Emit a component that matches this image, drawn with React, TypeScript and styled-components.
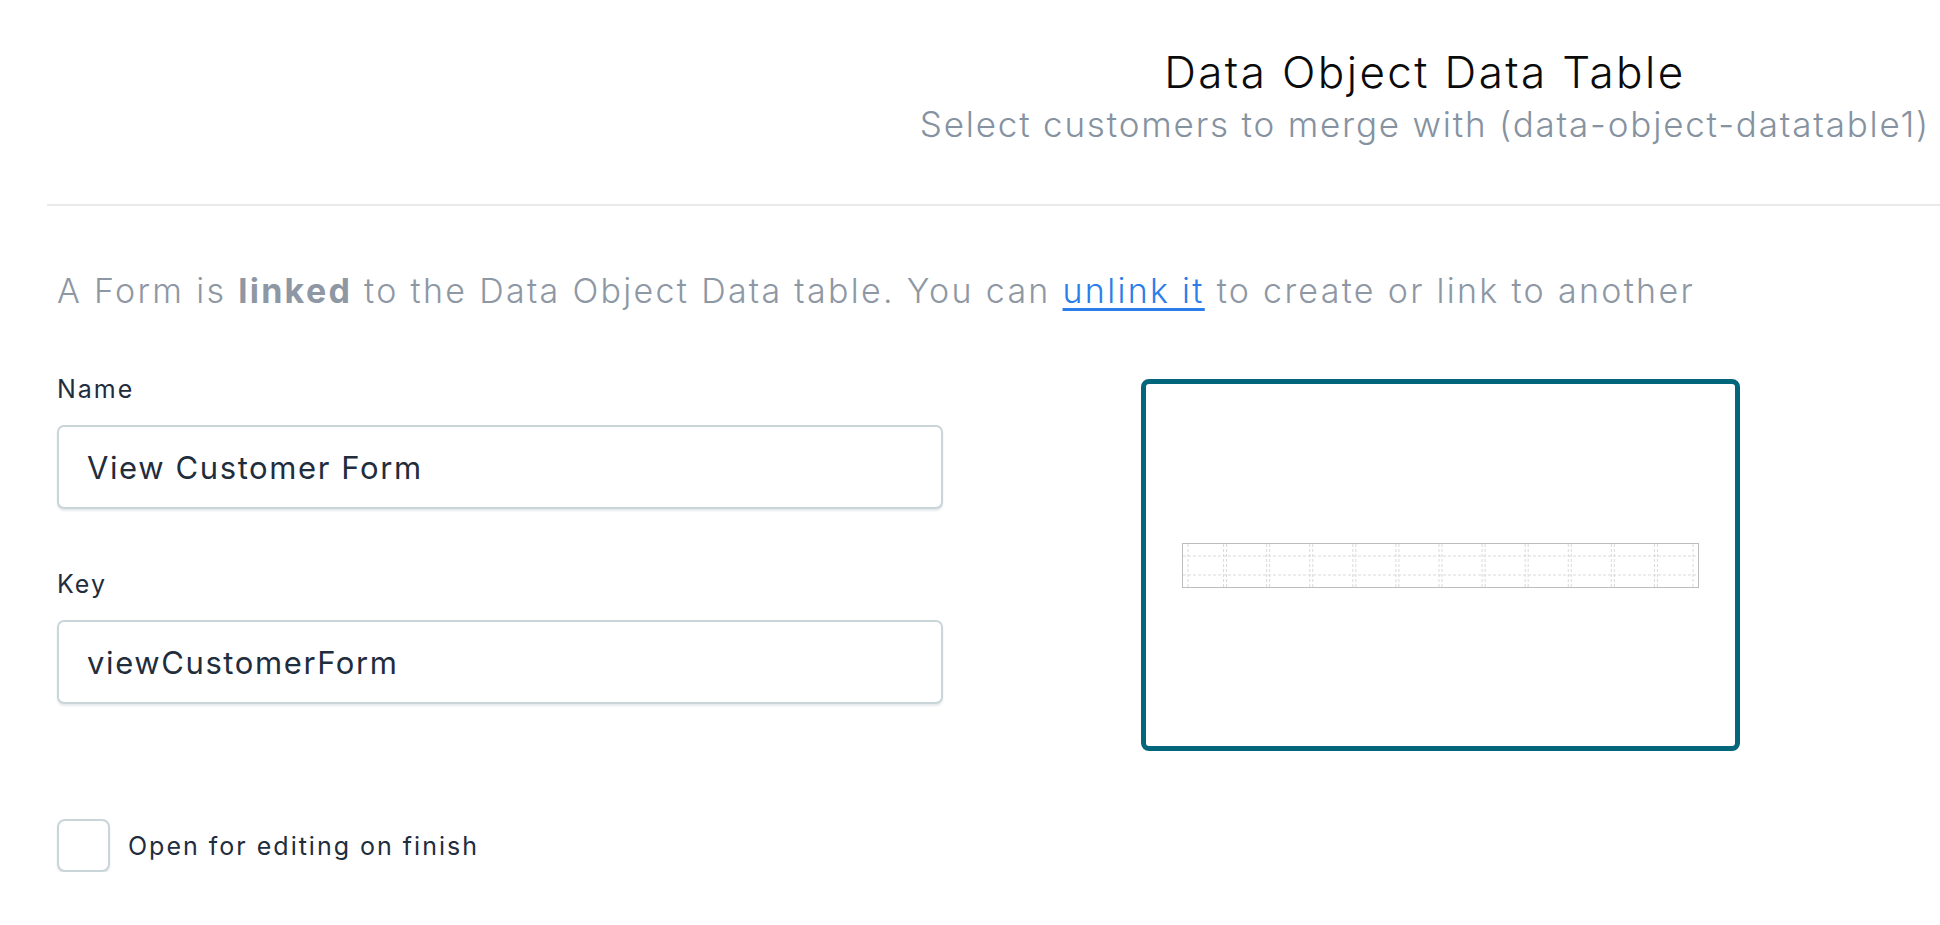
import React from 'react';
import styled, { createGlobalStyle } from 'styled-components';

const GlobalStyle = createGlobalStyle`
  html, body {
    margin: 0;
    padding: 0;
    background: #ffffff;
  }
  body {
    font-family: Inter, "Open Sans", "Liberation Sans", sans-serif;
    color: #1f2d3d;
  }
`;

const Page = styled.div`
  padding-left: 47px;
  width: 1940px;
  box-sizing: border-box;
`;

const Header = styled.header`
  display: flex;
  justify-content: flex-end;
  padding: 46px 10px 0 0;
`;

const HeaderText = styled.div`
  text-align: center;
`;

const Title = styled.h1`
  margin: 0;
  font-size: 44px;
  line-height: 52px;
  font-weight: 300;
  letter-spacing: 2.4px;
  color: #0b0b0b;
`;

const Subtitle = styled.p`
  margin: 4px 0 0;
  font-size: 35px;
  line-height: 44px;
  font-weight: 300;
  letter-spacing: 1.8px;
  color: #8692a0;
`;

const Divider = styled.hr`
  margin: 58px 0 0;
  border: none;
  border-top: 2px solid #e8eaec;
`;

const Body = styled.div`
  padding-left: 10px;
`;

const Notice = styled.p`
  margin: 64px 0 0;
  font-size: 34px;
  line-height: 42px;
  font-weight: 300;
  letter-spacing: 2.3px;
  color: #8e97a4;

  strong {
    font-weight: 700;
  }

  a {
    color: #2b7de9;
    text-decoration: underline;
    text-underline-offset: 5px;
  }
`;

const FormRow = styled.div`
  display: flex;
  align-items: flex-start;
  gap: 198px;
  margin-top: 62px;
`;

const Fields = styled.div`
  width: 886px;
  display: flex;
  flex-direction: column;
`;

const Field = styled.div<{ $spaced?: boolean }>`
  display: flex;
  flex-direction: column;
  gap: 21px;
  margin-top: ${(p) => (p.$spaced ? '60px' : '0')};
`;

const Label = styled.label`
  font-size: 25px;
  line-height: 30px;
  font-weight: 400;
  letter-spacing: 2px;
  color: #1f2d3d;
`;

const TextInput = styled.input`
  box-sizing: border-box;
  width: 100%;
  height: 84px;
  padding: 0 28px;
  border: 2px solid #c9d5d9;
  border-radius: 7px;
  box-shadow: 0 2px 2px rgba(120, 140, 150, 0.18);
  font-family: inherit;
  font-size: 31px;
  font-weight: 400;
  letter-spacing: 1.6px;
  color: #1f2d3d;
  background: #fff;
  outline: none;
`;

const CheckRow = styled.label`
  display: flex;
  align-items: center;
  gap: 18px;
  margin-top: 115px;
  font-size: 25px;
  letter-spacing: 2px;
  color: #1f2d3d;
`;

const CheckBox = styled.input`
  appearance: none;
  margin: 0;
  width: 53px;
  height: 53px;
  border: 2px solid #c9d5d9;
  border-radius: 8px;
  box-shadow: 0 2px 2px rgba(120, 140, 150, 0.18);
  background: #fff;
`;

const Preview = styled.div`
  box-sizing: border-box;
  margin-top: 5px;
  width: 599px;
  height: 372px;
  border: 5px solid #03667a;
  border-radius: 8px;
  display: flex;
  align-items: center;
  justify-content: center;
  padding: 0 36px;
`;

const TableThumb = () => {
  const w = 517;
  const h = 45;
  const cols = 12;
  const cell = w / cols;
  const lines: number[] = [6, w - 6];
  for (let i = 1; i < cols; i++) {
    lines.push(i * cell - 1.5, i * cell + 1.5);
  }
  return (
    <svg width={w} height={h} viewBox={`0 0 ${w} ${h}`}>
      <g stroke="#dadada" strokeWidth="1" strokeDasharray="3 2">
        {lines.map((x) => (
          <line key={x} x1={x} y1={1} x2={x} y2={h - 1} />
        ))}
        <line x1={1} y1={13} x2={w - 1} y2={13} />
        <line x1={1} y1={32} x2={w - 1} y2={32} />
      </g>
      <rect x={0.5} y={0.5} width={w - 1} height={h - 1} fill="none" stroke="#bdbdbd" />
    </svg>
  );
};

export default function App() {
  return (
    <>
      <GlobalStyle />
      <Page>
        <Header>
          <HeaderText>
            <Title>Data Object Data Table</Title>
            <Subtitle>Select customers to merge with (data-object-datatable1)</Subtitle>
          </HeaderText>
        </Header>
        <Divider />
        <Body>
          <Notice>
            A Form is <strong>linked</strong> to the Data Object Data table. You can{' '}
            <a href="#unlink">unlink it</a> to create or link to another
          </Notice>
          <FormRow>
            <Fields>
              <Field>
                <Label htmlFor="name">Name</Label>
                <TextInput id="name" defaultValue="View Customer Form" />
              </Field>
              <Field $spaced>
                <Label htmlFor="key">Key</Label>
                <TextInput id="key" defaultValue="viewCustomerForm" />
              </Field>
              <CheckRow>
                <CheckBox type="checkbox" />
                Open for editing on finish
              </CheckRow>
            </Fields>
            <Preview>
              <TableThumb />
            </Preview>
          </FormRow>
        </Body>
      </Page>
    </>
  );
}
